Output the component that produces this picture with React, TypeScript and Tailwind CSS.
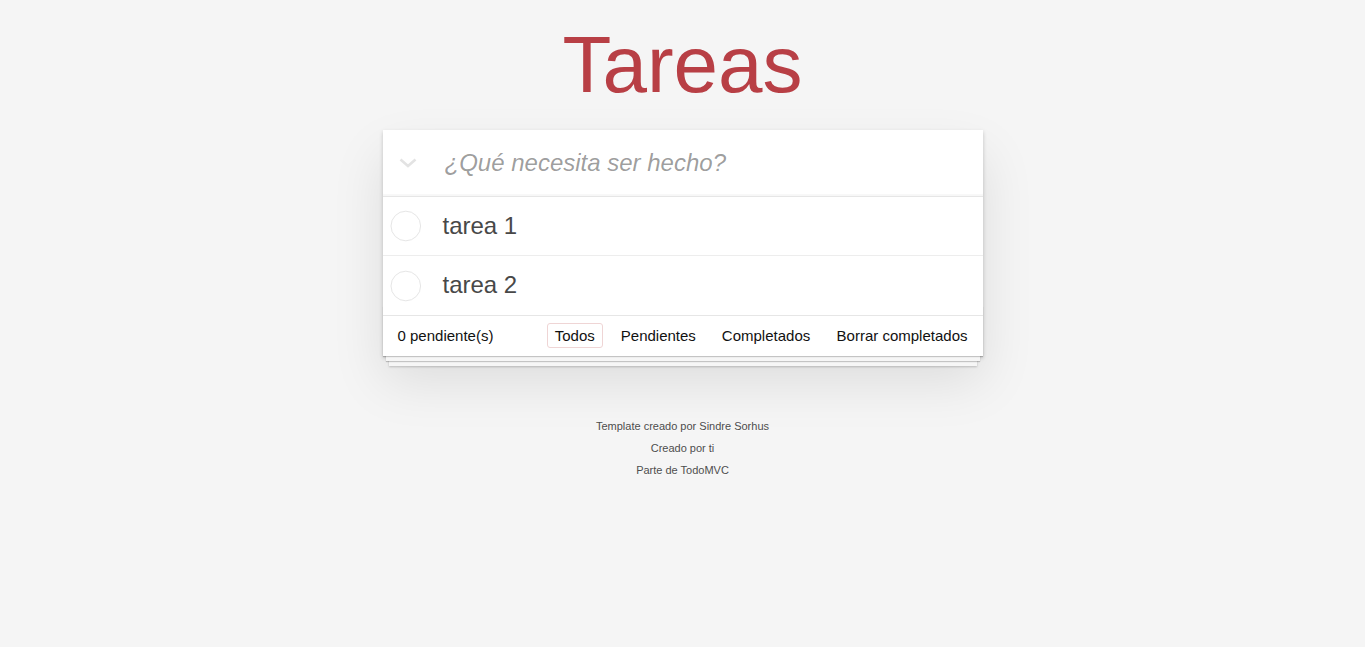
import React from "react";

function Circle() {
  return (
    <svg width="40" height="40" viewBox="0 0 40 40" className="shrink-0">
      <circle cx="22.8" cy="20" r="14.8" fill="none" stroke="#e6e6e6" strokeWidth="1" />
    </svg>
  );
}

export default function App() {
  const todos = ["tarea 1", "tarea 2"];
  return (
    <div className="min-h-screen bg-[#f5f5f5] font-['Liberation_Sans',Arial,sans-serif] text-[#111111]">
      <h1 className="pt-[25px] text-center text-[80px] leading-[80px] font-normal text-[#b83f45]">Tareas</h1>
      <section className="relative mx-auto mt-[25px] w-[600px] bg-white shadow-[0_2px_4px_0_rgba(0,0,0,0.2),0_25px_50px_0_rgba(0,0,0,0.1)]">
        <header className="flex h-[66px] items-center shadow-[inset_0_-2px_1px_rgba(0,0,0,0.03)]">
          <div className="flex w-[60px] shrink-0 pl-[16px]">
            <svg width="18" height="10" viewBox="0 0 18 10">
              <polyline points="1.5,1.5 9,8 16.5,1.5" fill="none" stroke="#e3e3e3" strokeWidth="2.6" />
            </svg>
          </div>
          <input
            className="min-w-0 flex-1 bg-transparent pl-[2px] pr-4 text-[24px] leading-[1.4] text-[#484848] outline-none placeholder:italic placeholder:text-[rgba(0,0,0,0.4)]"
            placeholder="¿Qué necesita ser hecho?"
          />
        </header>
        <ul className="border-t border-[#e6e6e6]">
          {todos.map((t) => (
            <li key={t} className="flex h-[59px] items-center border-b border-[#ededed] last:border-b-0">
              <Circle />
              <span className="ml-[20px] text-[24px] leading-[1.2] text-[#484848]">{t}</span>
            </li>
          ))}
        </ul>
        <footer className="relative grid h-[41px] grid-cols-[1fr_auto_1fr] items-center border-t border-[#e6e6e6] px-[15px] pb-[1px] text-[15px] leading-[20px] text-[#111111]">
          <div className="pointer-events-none absolute bottom-0 left-0 right-0 h-[50px] overflow-hidden shadow-[0_1px_1px_rgba(0,0,0,0.2),0_8px_0_-3px_#f6f6f6,0_9px_1px_-3px_rgba(0,0,0,0.2),0_16px_0_-6px_#f6f6f6,0_17px_2px_-6px_rgba(0,0,0,0.2)]" />
          <span className="relative">0 pendiente(s)</span>
          <ul className="relative flex items-center gap-[4px]">
            <li>
              <a className="mx-[3px] block rounded-[3px] border border-[#efd5d5] px-[7px] py-[3px] leading-[17px]">Todos</a>
            </li>
            <li>
              <a className="mx-[3px] block rounded-[3px] border border-transparent px-[7px] py-[3px] leading-[17px]">Pendientes</a>
            </li>
            <li>
              <a className="mx-[3px] block rounded-[3px] border border-transparent px-[7px] py-[3px] leading-[17px]">Completados</a>
            </li>
          </ul>
          <button className="relative justify-self-end leading-[19px]">Borrar completados</button>
        </footer>
      </section>
      <footer className="mt-[65px] flex flex-col items-center gap-[11px] text-center text-[11px] leading-[11px] text-[#4d4d4d] [text-shadow:0_1px_0_rgba(255,255,255,0.5)]">
        <p>Template creado por Sindre Sorhus</p>
        <p>Creado por ti</p>
        <p>Parte de TodoMVC</p>
      </footer>
    </div>
  );
}
